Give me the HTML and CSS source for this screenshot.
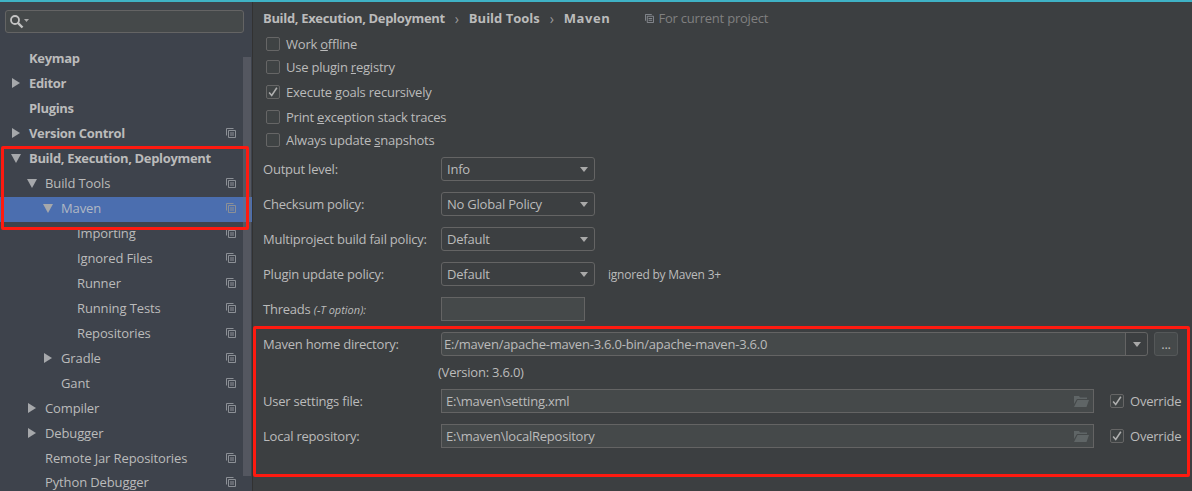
FILE: index.html
```html
<!DOCTYPE html>
<html lang="en">
<head>
    <meta charset="UTF-8">
    <title>Settings - Maven</title>
    <link rel="stylesheet" href="styles.css">
</head>
<body>
    <svg class="defs" width="0" height="0">
        <symbol id="copy" viewBox="0 0 10 10">
            <path d="M.5 7.500V.5h7M2.500 2.500h7v7h-7zM4 5h4M4 7h4" fill="none" stroke="#8c9096"/>
        </symbol>
        <symbol id="folder" viewBox="0 0 15 12">
            <path d="M0 1h5l1 1.500h7v1.500H3L0 9z M3.500 5H15l-2.500 7H0z" fill="#5f6566"/>
        </symbol>
        <symbol id="check" viewBox="0 0 14 14">
            <path d="M2.500 7.500l3 3.500 6-9" fill="none" stroke="#b0b0b0" stroke-width="1.800"/>
        </symbol>
    </svg>

    <div class="topbar"></div>
    <div class="window">
        <!-- Settings tree -->
        <aside class="sidebar">
            <div class="search">
                <svg width="19" height="14" viewBox="0 0 19 14">
                    <circle cx="5" cy="5" r="4" fill="none" stroke="#c4c4c4" stroke-width="1.800"/>
                    <path d="M8 8l4.500 4.500" stroke="#c4c4c4" stroke-width="2.400"/>
                    <path d="M14 4h5l-2.500 3z" fill="#a9a9a9"/>
                </svg>
            </div>
            <div class="tree">
                <div class="row bold"><span class="arrow"></span>Keymap</div>
                <div class="row bold"><span class="arrow closed"></span>Editor</div>
                <div class="row bold"><span class="arrow"></span>Plugins</div>
                <div class="row bold"><span class="arrow closed"></span>Version Control<svg class="copy"><use href="#copy"/></svg></div>
                <div class="row bold"><span class="arrow open"></span>Build, Execution, Deployment</div>
                <div class="row lvl1"><span class="arrow open"></span>Build Tools<svg class="copy"><use href="#copy"/></svg></div>
                <div class="row lvl2 selected"><span class="arrow open"></span>Maven<svg class="copy"><use href="#copy"/></svg></div>
                <div class="row lvl3"><span class="arrow"></span>Importing<svg class="copy"><use href="#copy"/></svg></div>
                <div class="row lvl3"><span class="arrow"></span>Ignored Files<svg class="copy"><use href="#copy"/></svg></div>
                <div class="row lvl3"><span class="arrow"></span>Runner<svg class="copy"><use href="#copy"/></svg></div>
                <div class="row lvl3"><span class="arrow"></span>Running Tests<svg class="copy"><use href="#copy"/></svg></div>
                <div class="row lvl3"><span class="arrow"></span>Repositories<svg class="copy"><use href="#copy"/></svg></div>
                <div class="row lvl2"><span class="arrow closed"></span>Gradle<svg class="copy"><use href="#copy"/></svg></div>
                <div class="row lvl2"><span class="arrow"></span>Gant<svg class="copy"><use href="#copy"/></svg></div>
                <div class="row lvl1"><span class="arrow closed"></span>Compiler<svg class="copy"><use href="#copy"/></svg></div>
                <div class="row lvl1"><span class="arrow closed"></span>Debugger</div>
                <div class="row lvl1"><span class="arrow"></span>Remote Jar Repositories<svg class="copy"><use href="#copy"/></svg></div>
                <div class="row lvl1 last"><span class="arrow"></span>Python Debugger<svg class="copy"><use href="#copy"/></svg></div>
            </div>
            <div class="scrollbar"></div>
        </aside>

        <!-- Maven settings -->
        <main class="content">
            <div class="crumbs">
                <b>Build, Execution, Deployment</b>
                <span class="sep">›</span>
                <b class="wide">Build Tools</b>
                <span class="sep">›</span>
                <b class="wider">Maven</b>
                <span class="scope"><svg class="copy-small"><use href="#copy"/></svg>For current project</span>
            </div>

            <div class="checks">
                <label class="check"><span class="box"></span><span>Work <u>o</u>ffline</span></label>
                <label class="check"><span class="box"></span><span>Use plugin <u>r</u>egistry</span></label>
                <label class="check gap"><span class="box"><svg><use href="#check"/></svg></span><span>Execute <u>g</u>oals recursively</span></label>
                <label class="check gap"><span class="box"></span><span>Print <u>e</u>xception stack traces</span></label>
                <label class="check"><span class="box"></span><span>Always update <u>s</u>napshots</span></label>
            </div>

            <div class="field f-first">
                <span class="name">Output level:</span>
                <div class="select"><span>Info</span><i class="caret"></i></div>
            </div>
            <div class="field">
                <span class="name">Checksum policy:</span>
                <div class="select"><span>No Global Policy</span><i class="caret"></i></div>
            </div>
            <div class="field">
                <span class="name">Multiproject build fail policy:</span>
                <div class="select"><span>Default</span><i class="caret"></i></div>
            </div>
            <div class="field">
                <span class="name">Plugin update policy:</span>
                <div class="select"><span>Default</span><i class="caret"></i></div>
                <span class="hint">ignored by Maven 3+</span>
            </div>
            <div class="field">
                <span class="name">Threads <em>(-T option):</em></span>
                <div class="input threads"></div>
            </div>

            <div class="field">
                <span class="name">Maven home directory:</span>
                <div class="combo"><span>E:/maven/apache-maven-3.6.0-bin/apache-maven-3.6.0</span><span class="combo-btn"><i class="caret"></i></span></div>
                <div class="dots">...</div>
            </div>
            <div class="version">(Version: 3.6.0)</div>
            <div class="field f-user">
                <span class="name">User settings file:</span>
                <div class="input path"><span>E:\maven\setting.xml</span><svg class="folder"><use href="#folder"/></svg></div>
                <label class="check override"><span class="box"><svg><use href="#check"/></svg></span><span>Override</span></label>
            </div>
            <div class="field">
                <span class="name">Local repository:</span>
                <div class="input path"><span>E:\maven\localRepository</span><svg class="folder"><use href="#folder"/></svg></div>
                <label class="check override"><span class="box"><svg><use href="#check"/></svg></span><span>Override</span></label>
            </div>
        </main>
    </div>

    <!-- Red annotation boxes -->
    <div class="mark mark-tree"></div>
    <div class="mark mark-form"></div>
</body>
</html>
```

FILE: styles.css
```css
html, body {
    height: 100%;
}
body {
    margin: 0;
    background: #3c3f41;
    color: #bbbbbb;
    font-family: "Open Sans", "Noto Sans", sans-serif;
    font-size: 13px;
    letter-spacing: -0.22px;
    overflow: hidden;
}
b {
    letter-spacing: -0.33px;
}
b.wide {
    letter-spacing: 0;
}
b.wider {
    letter-spacing: 0.6px;
}
.defs {
    display: block;
}
.topbar {
    height: 2px;
    background: #3fb2c6;
}
.window {
    display: flex;
    height: 489px;
}

/* sidebar */
.sidebar {
    position: relative;
    width: 252px;
    flex: none;
    background: #3e434c;
    border-right: 1px solid #323232;
    overflow: hidden;
    letter-spacing: -0.12px;
}
.search {
    display: flex;
    align-items: center;
    height: 21px;
    margin: 8px 8px 0 5px;
    padding-left: 4px;
    background: #45494a;
    border: 1px solid #646464;
    border-radius: 3px;
}
.tree {
    margin-top: 14px;
}
.row {
    display: flex;
    align-items: center;
    box-sizing: border-box;
    height: 25px;
    padding: 0 0 3px 12px;
    white-space: nowrap;
}
.row.last {
    height: 20px;
    padding-bottom: 0;
}
.bold {
    font-weight: 700;
    letter-spacing: -0.33px;
}
.lvl1 {
    padding-left: 28px;
}
.lvl2 {
    padding-left: 44px;
}
.lvl3 {
    padding-left: 60px;
}
.selected {
    background: #4b6eaf;
    color: #b0b8c4;
}
.arrow {
    flex: none;
    width: 17px;
    height: 10px;
}
.arrow.closed {
    width: 0;
    height: 0;
    margin-right: 9px;
    border-left: 8px solid #a6a8ab;
    border-top: 5px solid transparent;
    border-bottom: 5px solid transparent;
}
.arrow.open {
    width: 0;
    height: 0;
    margin: 0 8px 0 -1px;
    border-top: 9px solid #a6a8ab;
    border-left: 5px solid transparent;
    border-right: 5px solid transparent;
}
.copy {
    flex: none;
    width: 10px;
    height: 10px;
    margin-left: auto;
    margin-right: 16px;
}
.scrollbar {
    position: absolute;
    left: 243px;
    top: 55px;
    width: 8px;
    height: 419px;
    background: rgba(110, 114, 122, 0.45);
}

/* form */
.content {
    flex: 1;
    padding: 6px 0 0 10px;
    white-space: nowrap;
}
.crumbs {
    display: flex;
    align-items: center;
    height: 20px;
}
.sep {
    width: 24px;
    text-align: center;
    font-size: 14px;
    color: #9a9a9a;
}
.scope {
    display: flex;
    align-items: center;
    margin-left: 35px;
    color: #808080;
}
.copy-small {
    width: 9px;
    height: 9px;
    margin-right: 4px;
}
.checks {
    margin-top: 4px;
}
.check {
    display: flex;
    align-items: center;
    height: 23px;
}
.check.gap {
    margin-top: 2px;
}
.box {
    flex: none;
    width: 12px;
    height: 12px;
    margin: 0 6px 0 3px;
    border: 1px solid #666666;
    border-radius: 2px;
    background: #3f4344;
}
.box svg {
    display: block;
    width: 12px;
    height: 12px;
}
.field {
    display: flex;
    align-items: center;
    height: 24px;
    margin-top: 11px;
}
.f-first {
    margin-top: 6px;
}
.f-user {
    margin-top: 5px;
}
.name {
    flex: none;
    width: 178px;
}
.name em {
    font-size: 11px;
    letter-spacing: 0;
}
.select {
    display: flex;
    align-items: center;
    justify-content: space-between;
    box-sizing: border-box;
    width: 154px;
    height: 24px;
    padding: 0 6px 0 5px;
    border: 1px solid #646464;
    border-radius: 3px;
    background: #3c3f41;
}
.caret {
    width: 0;
    height: 0;
    border-top: 5px solid #a9a9a9;
    border-left: 4.500px solid transparent;
    border-right: 4.500px solid transparent;
}
.hint {
    margin-left: 13px;
    font-size: 12px;
}
.input {
    box-sizing: border-box;
    height: 24px;
    border: 1px solid #646464;
    background: #45494a;
}
.threads {
    width: 144px;
}
.path {
    display: flex;
    align-items: center;
    justify-content: space-between;
    width: 653px;
    padding: 0 4px 0 4px;
}
.combo {
    display: flex;
    align-items: center;
    justify-content: space-between;
    box-sizing: border-box;
    width: 707px;
    height: 24px;
    padding-left: 2px;
    border: 1px solid #646464;
    border-radius: 3px;
    background: #45494a;
}
.combo-btn {
    display: flex;
    align-items: center;
    justify-content: center;
    width: 21px;
    height: 22px;
    border-left: 1px solid #646464;
    background: #3c3f41;
    border-radius: 0 3px 3px 0;
}
.dots {
    box-sizing: border-box;
    width: 24px;
    height: 24px;
    margin-left: 6px;
    border: 1px solid #555859;
    border-radius: 3px;
    background: #45494a;
    text-align: center;
    line-height: 22px;
}
.version {
    height: 23px;
    margin: 5px 0 0 175px;
    line-height: 23px;
}
.folder {
    width: 15px;
    height: 12px;
}
.override {
    height: 24px;
    margin-left: 13px;
}

/* annotations */
.mark {
    position: absolute;
    box-sizing: border-box;
    border: 3px solid #fe1a10;
    border-radius: 2px;
}
.mark-tree {
    left: 1px;
    top: 146px;
    width: 248px;
    height: 84px;
}
.mark-form {
    left: 253px;
    top: 326px;
    width: 937px;
    height: 151px;
}
```
